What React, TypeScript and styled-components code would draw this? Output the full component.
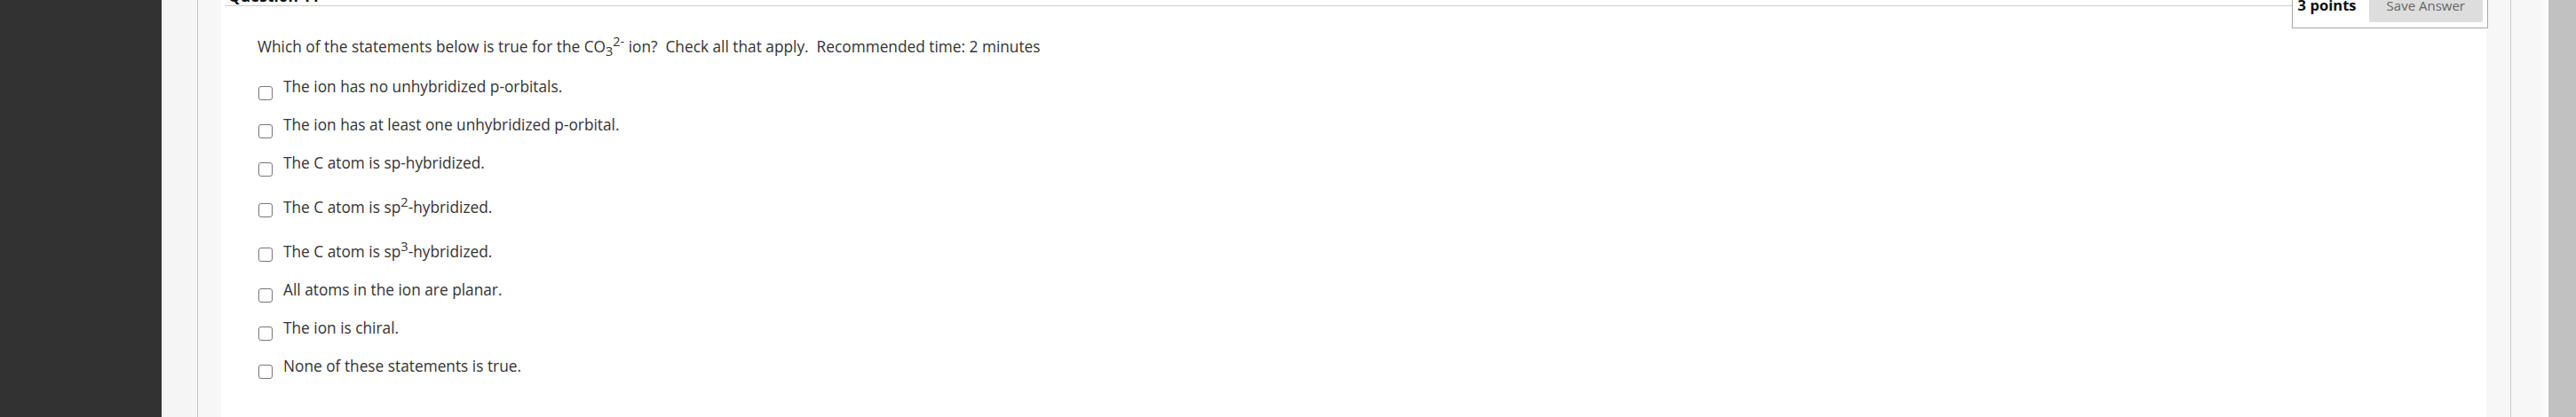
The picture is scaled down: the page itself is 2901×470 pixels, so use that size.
import React from "react";
import styled, { createGlobalStyle } from "styled-components";

const Global = createGlobalStyle`
  html, body { margin: 0; padding: 0; }
  body {
    font-family: "Open Sans", "Liberation Sans", sans-serif;
    background: #f7f7f7;
  }
`;

const Page = styled.div`
  display: flex;
  height: 470px;
  overflow: hidden;
`;

const Sidebar = styled.div`
  width: 182px;
  flex: none;
  background: #323232;
`;

const LeftGutter = styled.div`
  width: 40px;
  flex: none;
  background: #f5f5f5;
  border-right: 1px solid #c9c9c9;
`;

const ContentArea = styled.div`
  flex: 1;
  min-width: 0;
  display: flex;
  background: #f7f7f7;
  padding: 0 27px 0 26px;
  border-right: 1px solid #c9c9c9;
`;

const RightGutter = styled.div`
  width: 34px;
  flex: none;
  background: #f7f7f7;
  border-right: 8px solid #fbfbfb;
`;

const Scrollbar = styled.div`
  width: 31px;
  flex: none;
  background: #c1c1c1;
`;

const Card = styled.div`
  flex: 1;
  background: #ffffff;
  padding-left: 41px;
  color: #333333;
  font-size: 17.3px;
`;

const Header = styled.div`
  display: flex;
  align-items: flex-start;
  margin-top: -14px;
`;

const Title = styled.h3`
  flex: 1;
  margin: 0 0 0 -37px;
  padding-left: 4px;
  font-size: 17.3px;
  font-weight: 700;
  line-height: 20px;
  color: #111;
  border-bottom: 1px solid #cccccc;
`;

const PointsBox = styled.div`
  display: flex;
  align-items: baseline;
  gap: 14px;
  padding: 7px 5px 6px 6px;
  margin-right: -2px;
  border: 1px solid #a8a8a8;
  background: #fff;
`;

const Points = styled.span`
  font-size: 16.6px;
  font-weight: 700;
  color: #111;
  line-height: 24px;
`;

const SaveButton = styled.button`
  font-family: inherit;
  font-size: 15px;
  line-height: 24px;
  color: #666666;
  background: #dddddd;
  border: none;
  border-radius: 2px;
  padding: 0 20px 7px;
`;

const Question = styled.p`
  margin: 3px 0 0;
  line-height: 24px;
`;

const Options = styled.ul`
  list-style: none;
  margin: 16px 0 0;
  padding: 0 0 0 1px;
`;

const Option = styled.li`
  display: flex;
  align-items: center;
  gap: 12px;
  margin-bottom: 20px;
`;

const Box = styled.input.attrs({ type: "checkbox" })`
  appearance: none;
  flex: none;
  width: 16px;
  height: 16px;
  margin: 7px 0 -7px;
  border: 1px solid #777777;
  border-radius: 3px;
  background: #fff;
`;

const Label = styled.label`
  line-height: 23px;

  sup {
    font-size: 85%;
    line-height: 25px;
  }
`;

const options: React.ReactNode[] = [
  "The ion has no unhybridized p-orbitals.",
  "The ion has at least one unhybridized p-orbital.",
  "The C atom is sp-hybridized.",
  <>The C atom is sp<sup>2</sup>-hybridized.</>,
  <>The C atom is sp<sup>3</sup>-hybridized.</>,
  "All atoms in the ion are planar.",
  "The ion is chiral.",
  "None of these statements is true.",
];

export default function App() {
  return (
    <>
      <Global />
      <Page>
        <Sidebar />
        <LeftGutter />
        <ContentArea>
          <Card>
            <Header>
              <Title>Question 11</Title>
              <PointsBox>
                <Points>3 points</Points>
                <SaveButton>Save Answer</SaveButton>
              </PointsBox>
            </Header>
            <Question>
              Which of the statements below is true for the CO<sub>3</sub>
              <sup>2-</sup> ion?&nbsp; Check all that apply.&nbsp; Recommended time: 2 minutes
            </Question>
            <Options>
              {options.map((o, i) => (
                <Option key={i}>
                  <Box id={`opt${i}`} />
                  <Label htmlFor={`opt${i}`}>{o}</Label>
                </Option>
              ))}
            </Options>
          </Card>
        </ContentArea>
        <RightGutter />
        <Scrollbar />
      </Page>
    </>
  );
}
